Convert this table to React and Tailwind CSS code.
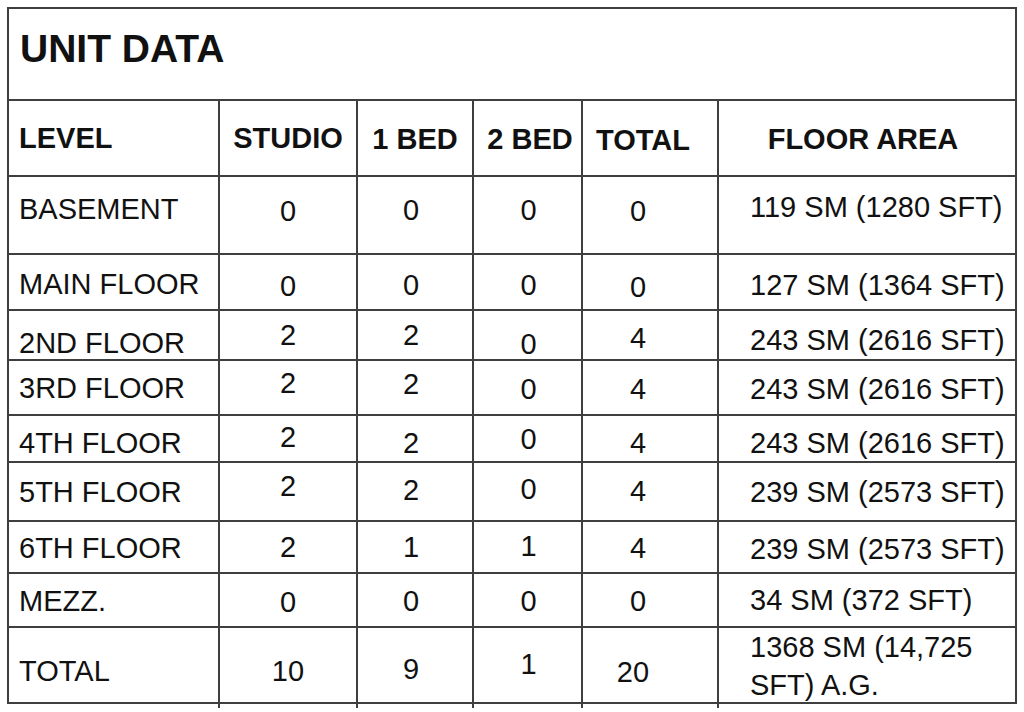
import React from 'react';

const GRID = 'grid grid-cols-[211px_138px_116px_109px_136px_298px]';
const LINE = 'border-[#3f3f3f]';

const headH = [
  'justify-start pl-[10px]',
  'justify-center',
  'justify-center',
  'justify-center pl-[5px]',
  'justify-center pr-[14px]',
  'justify-center pr-[8px]',
];

const bodyH = [
  'justify-start pl-[10px]',
  'justify-center',
  'justify-center pr-[8px]',
  'justify-center pl-[2px]',
  'justify-center pr-[24px]',
  'justify-start pl-[31px]',
];

const header = [
  ['LEVEL', 'pt-[21px]'],
  ['STUDIO', 'pt-[21px]'],
  ['1 BED', 'pt-[22px]'],
  ['2 BED', 'pt-[22px]'],
  ['TOTAL', 'pt-[23px]'],
  ['FLOOR AREA', 'pt-[22px]'],
];

const rows = [
  {
    h: 'h-[78px]',
    cells: [
      ['BASEMENT', 'pt-[16px]'],
      ['0', 'pt-[18px]'],
      ['0', 'pt-[17px]'],
      ['0', 'pt-[17px]'],
      ['0', 'pt-[18px]'],
      ['119 SM (1280 SFT)', 'pt-[14px]'],
    ],
  },
  {
    h: 'h-[56px]',
    cells: [
      ['MAIN FLOOR', 'pt-[13px]'],
      ['0', 'pt-[15px]'],
      ['0', 'pt-[14px]'],
      ['0', 'pt-[14px]'],
      ['0', 'pt-[16px]'],
      ['127 SM (1364 SFT)', 'pt-[14px]'],
    ],
  },
  {
    h: 'h-[50px]',
    cells: [
      ['2ND FLOOR', 'pt-[16px]'],
      ['2', 'pt-[8px]'],
      ['2', 'pt-[8px]'],
      ['0', 'pt-[17px]'],
      ['4', 'pt-[11px]'],
      ['243 SM (2616 SFT)', 'pt-[13px]'],
    ],
  },
  {
    h: 'h-[55px]',
    cells: [
      ['3RD FLOOR', 'pt-[11px]'],
      ['2', 'pt-[6px]'],
      ['2', 'pt-[7px]'],
      ['0', 'pt-[12px]'],
      ['4', 'pt-[12px]'],
      ['243 SM (2616 SFT)', 'pt-[12px]'],
    ],
  },
  {
    h: 'h-[47px]',
    cells: [
      ['4TH FLOOR', 'pt-[11px]'],
      ['2', 'pt-[5px]'],
      ['2', 'pt-[11px]'],
      ['0', 'pt-[7px]'],
      ['4', 'pt-[11px]'],
      ['243 SM (2616 SFT)', 'pt-[11px]'],
    ],
  },
  {
    h: 'h-[59px]',
    cells: [
      ['5TH FLOOR', 'pt-[13px]'],
      ['2', 'pt-[7px]'],
      ['2', 'pt-[11px]'],
      ['0', 'pt-[10px]'],
      ['4', 'pt-[12px]'],
      ['239 SM (2573 SFT)', 'pt-[13px]'],
    ],
  },
  {
    h: 'h-[52px]',
    cells: [
      ['6TH FLOOR', 'pt-[10px]'],
      ['2', 'pt-[9px]'],
      ['1', 'pt-[9px]'],
      ['1', 'pt-[8px]'],
      ['4', 'pt-[10px]'],
      ['239 SM (2573 SFT)', 'pt-[11px]'],
    ],
  },
  {
    h: 'h-[54px]',
    cells: [
      ['MEZZ.', 'pt-[11px]'],
      ['0', 'pt-[12px]'],
      ['0', 'pt-[11px]'],
      ['0', 'pt-[11px]'],
      ['0', 'pt-[11px]'],
      ['34 SM (372 SFT)', 'pt-[10px]'],
    ],
  },
];

export default function App() {
  return (
    <div
      className="min-h-screen bg-white pl-[7px] pt-[7px] text-[#111111]"
      style={{ fontFamily: '"Liberation Sans", Arial, Helvetica, sans-serif' }}
    >
      <div className="w-[1010px]">
        <div className={`w-[1010px] border-l-2 border-t-2 ${LINE}`}>
          {/* Title */}
          <div className={`h-[92px] border-b-2 border-r-2 ${LINE} pl-[11px] pt-[18px]`}>
            <div className="text-[39px] font-bold leading-[44px] whitespace-nowrap">UNIT DATA</div>
          </div>

          {/* Header */}
          <div className={`${GRID} h-[76px] border-b-2 ${LINE}`}>
            {header.map(([t, pt], i) => (
              <div key={i} className={`flex items-start ${headH[i]} ${pt} border-r-2 ${LINE}`}>
                <span className="text-[29px] font-bold leading-[32px] whitespace-nowrap">{t}</span>
              </div>
            ))}
          </div>

          {/* Body rows */}
          {rows.map((r, ri) => (
            <div key={ri} className={`${GRID} ${r.h} border-b-2 ${LINE}`}>
              {r.cells.map(([t, pt], i) => (
                <div key={i} className={`flex items-start ${bodyH[i]} ${pt} border-r-2 ${LINE}`}>
                  <span className="text-[29px] leading-[32px] whitespace-nowrap">{t}</span>
                </div>
              ))}
            </div>
          ))}

          {/* Total row */}
          <div className={`${GRID} h-[76px] border-b-2 ${LINE}`}>
            <div className={`flex items-start ${bodyH[0]} pt-[27px] border-r-2 ${LINE}`}>
              <span className="text-[29px] leading-[32px] whitespace-nowrap">TOTAL</span>
            </div>
            <div className={`flex items-start ${bodyH[1]} pt-[27px] border-r-2 ${LINE}`}>
              <span className="text-[29px] leading-[32px]">10</span>
            </div>
            <div className={`flex items-start ${bodyH[2]} pt-[25px] border-r-2 ${LINE}`}>
              <span className="text-[29px] leading-[32px]">9</span>
            </div>
            <div className={`flex items-start ${bodyH[3]} pt-[20px] border-r-2 ${LINE}`}>
              <span className="text-[29px] leading-[32px]">1</span>
            </div>
            <div className={`flex items-start justify-center pr-[34px] pt-[28px] border-r-2 ${LINE}`}>
              <span className="text-[29px] leading-[32px]">20</span>
            </div>
            <div className={`flex items-start ${bodyH[5]} pt-0 border-r-2 ${LINE}`}>
              <span className="text-[29px] leading-[38px] whitespace-nowrap">
                1368 SM (14,725
                <br />
                SFT) A.G.
              </span>
            </div>
          </div>
        </div>

        {/* small overrun of the column lines below the table */}
        <div className={`${GRID} h-[4px] pl-[2px]`}>
          <div className={`border-r-2 ${LINE}`} />
          <div className={`border-r-2 ${LINE}`} />
          <div className={`border-r-2 ${LINE}`} />
          <div className={`border-r-2 ${LINE}`} />
          <div className={`border-r-2 ${LINE}`} />
          <div />
        </div>
      </div>
    </div>
  );
}
